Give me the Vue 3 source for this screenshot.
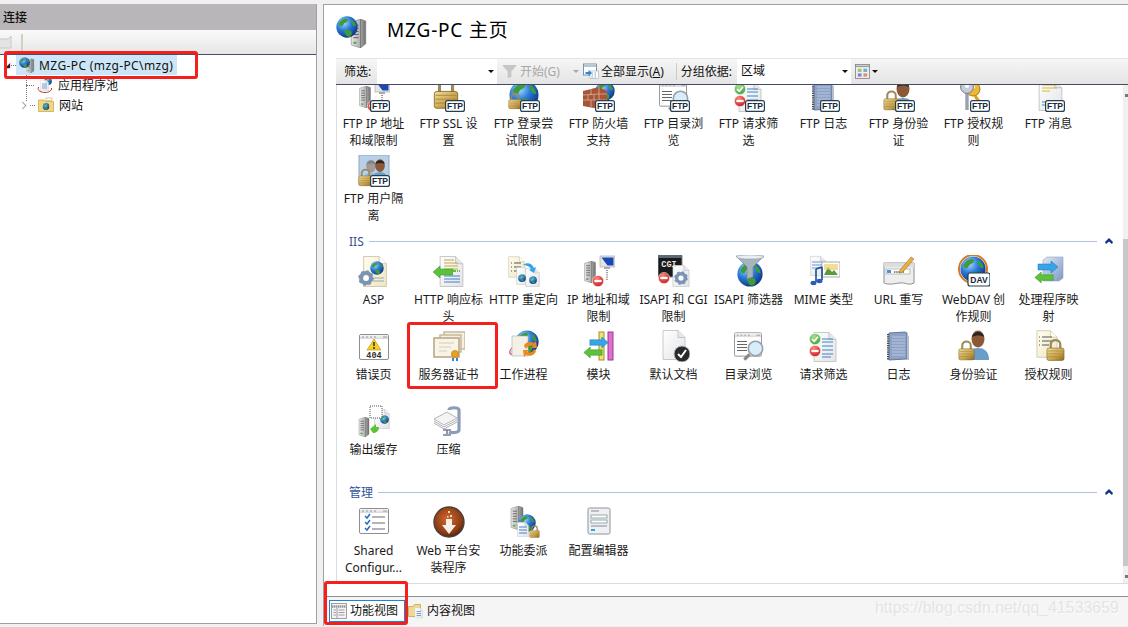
<template>
  <svg class="defs" width="0" height="0" aria-hidden="true">
    <defs>
      <radialGradient id="gBlue" cx="0.35" cy="0.3" r="0.8"><stop offset="0" stop-color="#a8dcff"/><stop offset="0.45" stop-color="#2a7bd8"/><stop offset="1" stop-color="#0b2a78"/></radialGradient>
      <linearGradient id="gGold" x1="0" y1="0" x2="1" y2="1"><stop offset="0" stop-color="#f3dfa0"/><stop offset="0.6" stop-color="#c8a24c"/><stop offset="1" stop-color="#8a6a22"/></linearGradient>
      <linearGradient id="gGrey" x1="0" y1="0" x2="1" y2="0"><stop offset="0" stop-color="#e8e8e8"/><stop offset="0.6" stop-color="#b0b0b0"/><stop offset="1" stop-color="#6c6c6c"/></linearGradient>
      <radialGradient id="gRed" cx="0.4" cy="0.3" r="0.8"><stop offset="0" stop-color="#ff8a78"/><stop offset="1" stop-color="#c0101a"/></radialGradient>
      <radialGradient id="gGreen" cx="0.4" cy="0.3" r="0.8"><stop offset="0" stop-color="#a8e090"/><stop offset="1" stop-color="#3a9a30"/></radialGradient>
      <linearGradient id="gPaper" x1="0" y1="0" x2="1" y2="1"><stop offset="0" stop-color="#ffffff"/><stop offset="1" stop-color="#e2e4e8"/></linearGradient>
      <linearGradient id="gCream" x1="0" y1="0" x2="1" y2="1"><stop offset="0" stop-color="#fffdf0"/><stop offset="1" stop-color="#f0e6c4"/></linearGradient>
      <linearGradient id="gSteel" x1="0" y1="0" x2="1" y2="1"><stop offset="0" stop-color="#dfe8f4"/><stop offset="1" stop-color="#7c97c4"/></linearGradient>
      <linearGradient id="gWin" x1="0" y1="0" x2="0" y2="1"><stop offset="0" stop-color="#f8f8f8"/><stop offset="1" stop-color="#d8d8d8"/></linearGradient>
      <radialGradient id="gBrown" cx="0.45" cy="0.4" r="0.6"><stop offset="0" stop-color="#d0682c"/><stop offset="0.8" stop-color="#8a3a14"/><stop offset="1" stop-color="#4c2410"/></radialGradient>
    </defs>

    <symbol id="s-globe" viewBox="0 0 32 32">
      <circle cx="16" cy="16" r="15.5" fill="url(#gBlue)"/>
      <path d="M4 11c3-5 8-8 12-7 3 2 0 5-3 6s-2 5-5 5-3-2-4-4zM12 21c3-2 8-1 10 1s1 6-2 8c-3 1-5-1-6-3s-3-4-2-6zM22 5c3 1 7 6 7 10-2 0-5-1-6-4s-2-3-1-6z" fill="#3f9a3c"/>
    </symbol>
    <symbol id="s-server" viewBox="0 0 16 28">
      <path d="M1 3l9-3 5 2v22l-5 4-9-3z" fill="url(#gGrey)" stroke="#777" stroke-width=".5"/>
      <path d="M10 0v28" stroke="#666" stroke-width=".7"/>
      <path d="M3 6h5M3 9h5M3 12h5M3 15h5M3 18h5" stroke="#555" stroke-width=".9"/>
      <rect x="3" y="22" width="3" height="2" fill="#5aa84a"/>
    </symbol>
    <symbol id="s-lock" viewBox="0 0 20 24">
      <path d="M5 11V6c0-6 10-6 10 0v5" fill="none" stroke="#9c8a5a" stroke-width="2.4"/>
      <rect x="1" y="10" width="18" height="13" rx="2" fill="url(#gGold)" stroke="#7c5c18" stroke-width=".6"/>
      <path d="M2 13h16M2 16h16M2 19h16" stroke="#a88636" stroke-width=".7"/>
    </symbol>
    <symbol id="s-no" viewBox="0 0 12 12">
      <circle cx="6" cy="6" r="5.6" fill="url(#gRed)" stroke="#fff" stroke-width=".5"/>
      <rect x="2.4" y="4.9" width="7.2" height="2.2" fill="#fff"/>
    </symbol>
    <symbol id="s-ok" viewBox="0 0 12 12">
      <circle cx="6" cy="6" r="5.6" fill="url(#gGreen)" stroke="#fff" stroke-width=".5"/>
      <path d="M3 6l2.2 2.4L9 3.8" fill="none" stroke="#fff" stroke-width="1.6"/>
    </symbol>
    <symbol id="s-doc" viewBox="0 0 24 30">
      <path d="M1 .5h15l7 7v22H1z" fill="url(#gPaper)" stroke="#bcbcbc" stroke-width=".8"/>
      <path d="M16 .5v7h7" fill="#e8e8e8" stroke="#bcbcbc" stroke-width=".8"/>
    </symbol>
    <symbol id="s-cream" viewBox="0 0 24 30">
      <path d="M1 .5h15l7 7v22H1z" fill="url(#gCream)" stroke="#c8c0a0" stroke-width=".8"/>
      <path d="M16 .5v7h7" fill="#fff" stroke="#c8c0a0" stroke-width=".8"/>
    </symbol>
    <symbol id="s-person" viewBox="0 0 24 30">
      <ellipse cx="12" cy="9" rx="6.5" ry="8.5" fill="#8a5a38"/>
      <path d="M6 7c1-6 11-7 12 0-3-2-8-2-12 0z" fill="#2c2420"/>
      <path d="M1 30c0-9 5-12 11-12s11 3 11 12z" fill="#6c9cc8"/>
    </symbol>
    <symbol id="s-gear" viewBox="0 0 16 16">
      <circle cx="8" cy="8" r="5" fill="none" stroke="#7c94b4" stroke-width="4"/>
      <circle cx="8" cy="8" r="6.6" fill="none" stroke="#7c94b4" stroke-width="2.4" stroke-dasharray="2.6 2.6"/>
      <circle cx="8" cy="8" r="2.6" fill="#fff"/>
    </symbol>
    <symbol id="s-lens" viewBox="0 0 16 16">
      <path d="M5 11l-4 4" stroke="#888" stroke-width="2.4"/>
      <circle cx="9.5" cy="6.5" r="5.5" fill="#d8ecfa" stroke="#9aa0a8" stroke-width="1.2"/>
    </symbol>
    <symbol id="s-window" viewBox="0 0 30 26">
      <rect x=".5" y=".5" width="29" height="25" rx="1.5" fill="#fff" stroke="#8e8e8e"/>
      <rect x="1" y="1" width="28" height="4" fill="url(#gWin)"/>
      <path d="M3 3h2M7 3h2M11 3h2M15 3h2M24 3h4" stroke="#999"/>
    </symbol>
    <symbol id="s-garrow" viewBox="0 0 20 12">
      <path d="M0 6l7-6v3h13v6H7v3z" fill="#5cc23a" stroke="#3a8a2a" stroke-width=".5"/>
    </symbol>
    <symbol id="s-barrow" viewBox="0 0 20 12">
      <path d="M20 6l-7-6v3H0v6h13v3z" fill="#35a4e8" stroke="#1c74b4" stroke-width=".5"/>
    </symbol>

    <symbol id="i-ip" viewBox="0 0 32 32">
      <use href="#s-server" x="0" y="6" width="14" height="22"/>
      <rect x="17" y="1" width="15" height="11" fill="#e4e4e4" stroke="#a0a0a0" stroke-width=".6"/>
      <path d="M18.5 2.5h12v8h-6z" fill="#1a48b8"/>
      <path d="M21 12h6v2h-6z" fill="#aaa"/>
      <path d="M24 15v10" stroke="#222" stroke-dasharray="1 1.2"/>
      <use href="#s-no" x="9" y="20" width="12" height="12"/>
    </symbol>
    <symbol id="i-ssl" viewBox="0 0 32 32">
      <use href="#s-lock" x="0" y="-2" width="26" height="32"/>
    </symbol>
    <symbol id="i-login" viewBox="0 0 32 32">
      <use href="#s-globe" x="1" y="0" width="30" height="30"/>
      <use href="#s-lock" x="0" y="12" width="14" height="18"/>
    </symbol>
    <symbol id="i-wall" viewBox="0 0 32 32">
      <use href="#s-globe" x="12" y="1" width="20" height="20"/>
      <path d="M0 11l16-4 8 4v15l-8 3-16-3z" fill="#a85438"/>
      <path d="M0 15l16-1 8 0M0 20l16 0 8 0M8 9v6M16 7v22M5 15v5M11 15v5M8 20v7" stroke="#e0c0a8" stroke-width=".7" fill="none"/>
    </symbol>
    <symbol id="i-browse" viewBox="0 0 32 32">
      <use href="#s-window" x="1" y="2" width="28" height="25"/>
      <path d="M4 11h10v1H4zM4 14h10v1H4zM4 17h10v1H4zM4 20h10v1H4z" fill="#666"/>
      <use href="#s-lens" x="10" y="10" width="21" height="21"/>
    </symbol>
    <symbol id="i-req" viewBox="0 0 32 32">
      <use href="#s-doc" x="5" y="2" width="24" height="30"/>
      <path d="M14 9h11M14 12h11M14 16h11M14 20h11M14 24h11M14 27h9" stroke="#3f82c6"/>
      <use href="#s-ok" x="1" y="3" width="12" height="12"/>
      <use href="#s-no" x="1" y="15" width="12" height="12"/>
    </symbol>
    <symbol id="i-log" viewBox="0 0 32 32">
      <path d="M6 3l16-1 2 1v26l-18 1z" fill="#8ea2c8" stroke="#4c5f88" stroke-width=".8"/>
      <path d="M9 7h13M9 10h13M9 13h13M9 16h13M9 19h13M9 22h13M9 25h13" stroke="#c4cfe4" stroke-width=".8"/>
      <path d="M5 4v26" stroke="#444" stroke-width="2" stroke-dasharray="1.2 1"/>
      <path d="M24 5l2 1v24l-2 0z" fill="#b8bfcc"/>
    </symbol>
    <symbol id="i-auth" viewBox="0 0 32 32">
      <use href="#s-person" x="8" y="0" width="24" height="30"/>
      <use href="#s-lock" x="0" y="10" width="17" height="21"/>
    </symbol>
    <symbol id="i-keys" viewBox="0 0 32 32">
      <path d="M17 16l9 12" stroke="#e0a020" stroke-width="3"/>
      <circle cx="15" cy="9" r="7" fill="#f0b830" stroke="#a87818"/>
      <circle cx="15" cy="7" r="2" fill="#fff"/>
      <path d="M9 12v18" stroke="#9aa0b0" stroke-width="3.4"/>
      <circle cx="9" cy="7" r="6.4" fill="#c8ccd8" stroke="#70788c"/>
      <circle cx="9" cy="6" r="2" fill="#fff"/>
    </symbol>
    <symbol id="i-msg" viewBox="0 0 32 32">
      <use href="#s-doc" x="5" y="0" width="25" height="31"/>
      <path d="M9 5h15M9 8h15M9 11h8" stroke="#d8b830" stroke-width="1.1"/>
      <path d="M9 22h12M9 25h12" stroke="#3f82c6"/>
    </symbol>
    <symbol id="i-authz" viewBox="0 0 32 32">
      <use href="#s-cream" x="3" y="0" width="22" height="28"/>
      <path d="M6 7h1M6 11h1M6 15h1M9 7h10M9 11h10M9 15h7" stroke="#555"/>
      <use href="#s-lock" x="13" y="8" width="19" height="24"/>
    </symbol>
    <symbol id="i-isolate" viewBox="0 0 32 32">
      <rect x="1" y="0" width="30" height="28" fill="#b8d0e8" stroke="#90a8c0"/>
      <use href="#s-person" x="4" y="4" width="18" height="23" opacity=".45"/>
      <use href="#s-person" x="13" y="3" width="18" height="24"/>
      <use href="#s-lock" x="0" y="13" width="15" height="19"/>
    </symbol>
    <symbol id="i-asp" viewBox="0 0 32 32">
      <use href="#s-cream" x="4" y="1" width="26" height="31"/>
      <use href="#s-globe" x="12" y="6" width="14" height="14"/>
      <path d="M15 23h11M15 26h11" stroke="#9aa" />
      <use href="#s-gear" x="0" y="15" width="16" height="16"/>
    </symbol>
    <symbol id="i-header" viewBox="0 0 32 32">
      <use href="#s-doc" x="6" y="1" width="25" height="31"/>
      <path d="M11 5h10M11 8h14M11 11h14M11 14h14" stroke="#c8a838"/>
      <path d="M11 21h16M11 24h16M11 27h16" stroke="#3f82c6"/>
      <use href="#s-garrow" x="0" y="11" width="20" height="12"/>
      <path d="M20 15h3v2h-3zM24 15h1v2h-1zM26 15h1v2h-1z" fill="#5cc23a"/>
    </symbol>
    <symbol id="i-redirect" viewBox="0 0 32 32">
      <use href="#s-cream" x="0" y="1" width="17" height="22"/>
      <path d="M3 8h1M3 12h1M3 16h1M6 8h7M6 12h7M6 16h7" stroke="#555"/>
      <use href="#s-doc" x="8" y="12" width="14" height="18"/>
      <use href="#s-doc" x="17" y="13" width="15" height="19"/>
      <use href="#s-globe" x="10" y="19" width="8" height="8"/>
      <use href="#s-globe" x="21" y="21" width="8" height="8"/>
      <path d="M15 10c4-3 9-2 11 3l2-1-2 6-5-3 2-1c-2-3-5-4-8-4z" fill="#35a4e8"/>
    </symbol>
    <symbol id="i-cgi" viewBox="0 0 32 32">
      <rect x="0" y="0" width="24" height="22" rx="1" fill="#1a1a1a" stroke="#888"/>
      <rect x="0" y="0" width="24" height="3" fill="#5c6a78"/>
      <use href="#s-doc" x="14" y="10" width="18" height="22"/>
      <use href="#s-gear" x="16" y="16" width="14" height="14"/>
      <use href="#s-no" x="0" y="17" width="12" height="12"/>
    </symbol>
    <symbol id="i-funnel" viewBox="0 0 32 32">
      <use href="#s-globe" x="4" y="6" width="26" height="26"/>
      <path d="M3 1h28L20 12v10l-6 2V12z" fill="#a8b4bc" stroke="#70808c" stroke-width=".6"/>
      <ellipse cx="17" cy="2" rx="14" ry="2" fill="#e8eef2" stroke="#8a98a4" stroke-width=".5"/>
    </symbol>
    <symbol id="i-mime" viewBox="0 0 32 32">
      <use href="#s-doc" x="2" y="0" width="16" height="22"/>
      <path d="M4 7h10M4 10h10M4 13h10" stroke="#6c9ad0"/>
      <rect x="14" y="7" width="18" height="15" fill="#fff" stroke="#aaa"/>
      <path d="M16 20l4-8 4 5 2-2 4 5z" fill="#5a9a3c"/>
      <path d="M16 9h14v6h-14z" fill="#e8c850" opacity=".6"/>
      <path d="M8 14v13M14 12v13M8 14l6-2" stroke="#1c4ca0" stroke-width="1.6" fill="none"/>
      <ellipse cx="5.500" cy="28" rx="3" ry="2.200" fill="#2a5cb8"/>
      <ellipse cx="11.500" cy="26" rx="3" ry="2.200" fill="#2a5cb8"/>
    </symbol>
    <symbol id="i-rewrite" viewBox="0 0 32 32">
      <path d="M1 8h30v20c-6 3-8-1-15 0s-10 2-15 0z" fill="#eee" stroke="#8e8e8e"/>
      <rect x="1" y="8" width="30" height="4" fill="#ddd"/>
      <rect x="3" y="14" width="24" height="5" fill="#fff" stroke="#999" stroke-width=".6"/>
      <rect x="4" y="15" width="4" height="3" fill="#4a90d0"/>
      <path d="M11 17h10" stroke="#111" stroke-dasharray="1.4 .8"/>
      <path d="M17 15L28 2l3 2-11 13-4 1z" fill="#e8b040" stroke="#8a6418" stroke-width=".5"/>
    </symbol>
    <symbol id="i-dav" viewBox="0 0 32 32">
      <circle cx="15" cy="14" r="14" fill="none" stroke="#d87820" stroke-width="2"/>
      <use href="#s-globe" x="2" y="1" width="26" height="26"/>
      <rect x="10" y="18" width="22" height="13" rx="2" fill="#fff" stroke="#27404f" stroke-width="1.2"/>
    </symbol>
    <symbol id="i-handler" viewBox="0 0 32 32">
      <path d="M10 5l4-3h16v21l-4 3H10z" fill="url(#gSteel)" stroke="#8ea4c0" stroke-width=".6"/>
      <use href="#s-barrow" x="3" y="6" width="24" height="12"/>
      <use href="#s-garrow" x="0" y="17" width="22" height="11"/>
    </symbol>
    <symbol id="i-404" viewBox="0 0 32 32">
      <use href="#s-window" x="0" y="4" width="32" height="26"/>
      <path d="M16 9l7 11H9z" fill="#f8d020" stroke="#b88810" stroke-width=".6"/>
      <path d="M16 12v4M16 17v2" stroke="#222" stroke-width="1.400"/>
    </symbol>
    <symbol id="i-cert" viewBox="0 0 32 32">
      <rect x="11" y="2" width="21" height="17" fill="#f6f0e2" stroke="#c4b498" stroke-width="1.400"/>
      <rect x="7" y="5" width="21" height="17" fill="#f6f0e2" stroke="#c4b498" stroke-width="1.400"/>
      <rect x="1" y="8" width="25" height="19" fill="#f8f4e8" stroke="#bca888" stroke-width="1.600"/>
      <path d="M6 13h15M6 17h12M6 21h8" stroke="#d8ccb4"/>
      <circle cx="22" cy="24" r="3.600" fill="#e8a020" stroke="#b87818" stroke-width=".6"/>
      <path d="M20 28v3M24 28v3" stroke="#2a6cd0" stroke-width="1.800"/>
    </symbol>
    <symbol id="i-worker" viewBox="0 0 32 32">
      <use href="#s-globe" x="7" y="0" width="24" height="24"/>
      <path d="M2 24c-1-4 1-6 4-7l2 8z" fill="#e0e0e0" stroke="#b02020" stroke-width=".8"/>
      <rect x="4" y="6" width="16" height="20" fill="#f4f1e4" stroke="#aaa" stroke-width=".6"/>
      <path d="M16 16c1-4 6-5 10-3l2-2 1 7-6 0 2-2c-3-1-6 0-7 3z" fill="#e88a20"/>
      <path d="M28 21c-1 4-6 6-10 4l-2 2-1-7 6 0-2 2c3 1 6 0 7-3z" fill="#e88a20"/>
    </symbol>
    <symbol id="i-module" viewBox="0 0 32 32">
      <rect x="16" y="2" width="5" height="28" fill="#f0e080" stroke="#a89020"/>
      <rect x="25" y="2" width="5" height="28" fill="#e070d0" stroke="#9a3a90"/>
      <use href="#s-barrow" x="6" y="7" width="20" height="11"/>
      <use href="#s-garrow" x="0" y="17" width="20" height="11"/>
    </symbol>
    <symbol id="i-default" viewBox="0 0 32 32">
      <use href="#s-doc" x="4" y="0" width="24" height="30"/>
      <circle cx="24" cy="24" r="8" fill="#2a2a2a" stroke="#bbb"/>
      <path d="M20 24l3 3 5-7" fill="none" stroke="#fff" stroke-width="2"/>
    </symbol>
    <symbol id="i-cache" viewBox="0 0 32 32">
      <use href="#s-doc" x="16" y="4" width="16" height="20"/>
      <use href="#s-globe" x="22" y="10" width="9" height="9"/>
      <rect x="12" y="1" width="12" height="12" fill="#fff" stroke="#555" stroke-dasharray="1 1"/>
      <use href="#s-server" x="0" y="12" width="12" height="20"/>
      <path d="M12 24l6-5v3h3c0 4-3 6-6 6z" fill="#5cc23a"/>
    </symbol>
    <symbol id="i-clamp" viewBox="0 0 32 32">
      <path d="M16 5c0-3 10-3 10 0v20c0 3-8 3-10 2" fill="none" stroke="#8e9cb8" stroke-width="3.200"/>
      <path d="M1 14l13-7 10 6-13 7z" fill="#f4f4f4" stroke="#999" stroke-width=".7"/>
      <path d="M1 16l10 6 13-7M1 18l10 6 13-7" fill="none" stroke="#999" stroke-width=".8"/>
      <path d="M10 25l8 0M14 25v4M10 30h8" stroke="#70809c" stroke-width="1.600" fill="none"/>
    </symbol>
    <symbol id="i-shared" viewBox="0 0 32 32">
      <use href="#s-window" x="1" y="2" width="30" height="26"/>
      <path d="M7 10l2 2 3-4M7 16l2 2 3-4M7 22l2 2 3-4" fill="none" stroke="#2a6cc8" stroke-width="1.500"/>
      <path d="M14 11h13M14 17h13M14 23h13" stroke="#667"/>
    </symbol>
    <symbol id="i-webpi" viewBox="0 0 32 32">
      <circle cx="16" cy="16" r="15" fill="url(#gBrown)" stroke="#4a4034" stroke-width="1.400"/>
      <path d="M13 13h6v6h4l-7 9-7-9h4z" fill="#f4f0e8"/>
      <path d="M15 5h2v2h-2zM17 9h2v2h-2zM14 10h1.500v1.500H14z" fill="#f8d8c0"/>
    </symbol>
    <symbol id="i-delegate" viewBox="0 0 32 32">
      <use href="#s-server" x="1" y="0" width="16" height="24"/>
      <use href="#s-globe" x="10" y="8" width="18" height="18"/>
      <use href="#s-doc" x="9" y="16" width="12" height="15"/>
      <path d="M11 21h8M11 24h8M11 27h8" stroke="#3f82c6"/>
      <use href="#s-lock" x="21" y="19" width="11" height="13"/>
    </symbol>
    <symbol id="i-editor" viewBox="0 0 32 32">
      <rect x="5" y="2" width="22" height="26" rx="1.500" fill="#eef0f2" stroke="#8e9298"/>
      <rect x="8" y="9" width="16" height="3" fill="#fff" stroke="#9aa"/>
      <rect x="8" y="14" width="16" height="3" fill="#fff" stroke="#9aa"/>
      <path d="M8 5h8M8 20h16" stroke="#889"/>
      <path d="M8 24h4" stroke="#35a4e8" stroke-width="2"/>
    </symbol>
    <symbol id="i-home" viewBox="0 0 32 32">
      <use href="#s-server" x="13" y="3" width="19" height="29"/>
      <use href="#s-globe" x="0" y="0" width="22" height="22"/>
    </symbol>
    <symbol id="i-pool" viewBox="0 0 32 32">
      <use href="#s-globe" x="14" y="0" width="16" height="16"/>
      <use href="#s-doc" x="6" y="6" width="18" height="22"/>
      <path d="M10 14h10M10 18h10M10 22h10" stroke="#3f82c6" stroke-width="1.400"/>
      <path d="M3 20c-3 8 6 11 13 11s14-3 13-9" fill="none" stroke="#c03028" stroke-width="2"/>
    </symbol>
    <symbol id="i-site" viewBox="0 0 32 32">
      <path d="M1 6h12l2 3h16v20H1z" fill="#f4d67c" stroke="#b89438" stroke-width="1.200"/>
      <rect x="16" y="2" width="12" height="5" fill="#fff" stroke="#b89438"/>
      <use href="#s-globe" x="9" y="12" width="14" height="14"/>
    </symbol>
    <symbol id="i-feature" viewBox="0 0 32 32">
      <rect x="1" y="1" width="30" height="30" fill="#f4f4f4" stroke="#888" stroke-width="1.600"/>
      <path d="M2 7h28" stroke="#999" stroke-width="5" stroke-dasharray="3 1"/>
      <path d="M12 10v20M5 14h5M5 19h5M5 24h5M15 14h12M15 19h12M15 24h12" stroke="#888" stroke-width="1.600"/>
    </symbol>
    <symbol id="i-content" viewBox="0 0 32 32">
      <path d="M1 7h9l3-4h12v24H1z" fill="#f0d890" stroke="#b89c50" stroke-width="1.400"/>
      <use href="#s-doc" x="13" y="9" width="17" height="22"/>
      <path d="M17 17h9M17 21h9M17 25h9" stroke="#3f82c6" stroke-width="1.400"/>
    </symbol>
    <symbol id="i-showall" viewBox="0 0 32 32">
      <rect x="1" y="2" width="26" height="22" fill="#fff" stroke="#5c7c94" stroke-width="1.600"/>
      <path d="M2 6h24" stroke="#9cb4c8" stroke-width="3"/>
      <rect x="14" y="16" width="17" height="15" fill="#fff" stroke="#8a9aa8"/>
      <path d="M17 20h3M23 20h3M17 24h3M23 24h3M17 28h3M23 28h3" stroke="#6688a8" stroke-width="1.600"/>
      <path d="M5 18h6v-4l7 6-7 6v-4H5z" fill="#2a88d8"/>
    </symbol>
    <symbol id="i-views" viewBox="0 0 32 32">
      <rect x="1" y="1" width="30" height="30" fill="#eee" stroke="#777" stroke-width="1.600"/>
      <path d="M2 5h28" stroke="#999" stroke-width="3"/>
      <rect x="6" y="10" width="8" height="7" fill="#9cc870"/>
      <rect x="18" y="10" width="8" height="7" fill="#70b0d8"/>
      <rect x="6" y="20" width="8" height="7" fill="#9080c8"/>
      <rect x="18" y="20" width="8" height="7" fill="#e09070"/>
    </symbol>
  </svg>

  <div class="page">
    <aside class="conn">
      <div class="conn-title">连接</div>
      <div class="conn-bar">
        <svg class="conn-tool" viewBox="0 0 14 14"><path d="M0 13V4h9l3-3v12z" fill="#e4e4e4" stroke="#c8c8c8"/></svg>
        <span class="conn-sep"></span>
      </div>
      <div class="tree">
        <div class="tree-row">
          <svg class="twist" viewBox="0 0 8 8"><path d="M7 1v6H1z" fill="#222"/></svg>
          <span class="dots"></span>
          <span class="tree-sel">
            <svg class="tree-icon" viewBox="0 0 32 32"><use href="#i-home"/></svg>
            <span class="tree-main">MZG-PC (mzg-PC\mzg)</span>
          </span>
        </div>
        <div class="tree-row sub">
          <span class="dots long"></span>
          <svg class="tree-icon" viewBox="0 0 32 32"><use href="#i-pool"/></svg>
          <span class="tree-text">应用程序池</span>
        </div>
        <div class="tree-row sub">
          <svg class="twist open" viewBox="0 0 8 10"><path d="M1.500 1l4 4-4 4" fill="none" stroke="#999" stroke-width="1.200"/></svg>
          <span class="dots short"></span>
          <svg class="tree-icon" viewBox="0 0 32 32"><use href="#i-site"/></svg>
          <span class="tree-text">网站</span>
        </div>
        <span class="tree-line"></span>
      </div>
    </aside>

    <main class="home">
      <header class="home-head">
        <svg class="home-icon" viewBox="0 0 32 32"><use href="#i-home"/></svg>
        <h1>MZG-PC 主页</h1>
      </header>

      <div class="filter-bar">
        <span class="f-label">筛选:</span>
        <span class="f-combo first"><i class="caret"></i></span>
        <svg class="f-funnel" viewBox="0 0 16 14"><path d="M0 0h16l-6 7v6l-4 1V7z" fill="#c4c8c4"/></svg>
        <span class="f-off">开始(G)</span>
        <i class="caret off"></i>
        <svg class="f-show" viewBox="0 0 32 32"><use href="#i-showall"/></svg>
        <span class="f-all">全部显示(<u>A</u>)</span>
        <span class="f-sep"></span>
        <span class="f-group">分组依据:</span>
        <span class="f-combo second">区域<i class="caret"></i></span>
        <svg class="f-views" viewBox="0 0 32 32"><use href="#i-views"/></svg>
        <i class="caret small"></i>
      </div>

      <div class="content">
        <div class="scroller">
          <div class="grid">
            <div v-for="item in ftpItems" :key="item.lines[0]" class="tile">
              <svg class="tile-icon" viewBox="0 0 32 32">
                <use :href="'#i-' + item.icon"/>
                <rect x="12.6" y="20.600" width="18.800" height="10.800" rx="2" fill="#fff" stroke="#27404f" stroke-width="1.200"/>
                <text x="22" y="29" text-anchor="middle" class="badge-text">FTP</text>
              </svg>
              <div class="tile-label"><div v-for="l in item.lines" :key="l">{{ l }}</div></div>
            </div>
          </div>

          <div v-for="sec in sections" :key="sec.title">
            <div class="sec-head">
              <span class="sec-title">{{ sec.title }}</span>
              <span class="sec-line"></span>
              <svg class="sec-chev" viewBox="0 0 8 6"><path d="M4 0l4 4-1 2-3-2.500L1 6 0 4z" fill="#0c3390"/></svg>
            </div>
            <div class="grid">
              <div v-for="item in sec.items" :key="item.lines[0]" class="tile in-sec">
                <svg class="tile-icon" viewBox="0 0 32 32">
                  <use :href="'#i-' + item.icon"/>
                  <text v-if="item.mark" :x="item.mark.x" :y="item.mark.y" text-anchor="middle" :class="item.mark.cls">{{ item.mark.text }}</text>
                </svg>
                <div class="tile-label"><div v-for="l in item.lines" :key="l">{{ l }}</div></div>
              </div>
            </div>
          </div>
        </div>
        <div class="scrollbar">
          <svg class="sb-mark" viewBox="0 0 4 4"><rect width="4" height="4" fill="#777"/></svg>
          <div class="sb-thumb"></div>
          <svg class="sb-mark" viewBox="0 0 4 4"><rect width="4" height="4" fill="#777"/></svg>
        </div>
      </div>

      <div class="spacer"></div>

      <footer class="tabs">
        <span class="tab active">
          <svg class="tab-icon" viewBox="0 0 32 32"><use href="#i-feature"/></svg>功能视图
        </span>
        <span class="tab">
          <svg class="tab-icon" viewBox="0 0 32 32"><use href="#i-content"/></svg>内容视图
        </span>
        <span class="mark">https://blog.csdn.net/qq_41533659</span>
      </footer>
    </main>

    <div class="red box-tree"></div>
    <div class="red box-cert"></div>
    <div class="red box-tab"></div>
  </div>
</template>

<script setup>
const ftpItems = [
  { icon: 'ip', lines: ['FTP IP 地址', '和域限制'] },
  { icon: 'ssl', lines: ['FTP SSL 设', '置'] },
  { icon: 'login', lines: ['FTP 登录尝', '试限制'] },
  { icon: 'wall', lines: ['FTP 防火墙', '支持'] },
  { icon: 'browse', lines: ['FTP 目录浏', '览'] },
  { icon: 'req', lines: ['FTP 请求筛', '选'] },
  { icon: 'log', lines: ['FTP 日志'] },
  { icon: 'auth', lines: ['FTP 身份验', '证'] },
  { icon: 'keys', lines: ['FTP 授权规', '则'] },
  { icon: 'msg', lines: ['FTP 消息'] },
  { icon: 'isolate', lines: ['FTP 用户隔', '离'] },
]

const sections = [
  {
    title: 'IIS',
    items: [
      { icon: 'asp', lines: ['ASP'] },
      { icon: 'header', lines: ['HTTP 响应标', '头'] },
      { icon: 'redirect', lines: ['HTTP 重定向'] },
      { icon: 'ip', lines: ['IP 地址和域', '限制'] },
      { icon: 'cgi', lines: ['ISAPI 和 CGI', '限制'], mark: { x: 11, y: 12, cls: 'cgi-text', text: 'CGI' } },
      { icon: 'funnel', lines: ['ISAPI 筛选器'] },
      { icon: 'mime', lines: ['MIME 类型'] },
      { icon: 'rewrite', lines: ['URL 重写'] },
      { icon: 'dav', lines: ['WebDAV 创', '作规则'], mark: { x: 21, y: 28, cls: 'badge-text', text: 'DAV' } },
      { icon: 'handler', lines: ['处理程序映', '射'] },
      { icon: '404', lines: ['错误页'], mark: { x: 16, y: 28, cls: 'cgi-text dark', text: '404' } },
      { icon: 'cert', lines: ['服务器证书'] },
      { icon: 'worker', lines: ['工作进程'] },
      { icon: 'module', lines: ['模块'] },
      { icon: 'default', lines: ['默认文档'] },
      { icon: 'browse', lines: ['目录浏览'] },
      { icon: 'req', lines: ['请求筛选'] },
      { icon: 'log', lines: ['日志'] },
      { icon: 'auth', lines: ['身份验证'] },
      { icon: 'authz', lines: ['授权规则'] },
      { icon: 'cache', lines: ['输出缓存'] },
      { icon: 'clamp', lines: ['压缩'] },
    ],
  },
  {
    title: '管理',
    items: [
      { icon: 'shared', lines: ['Shared', 'Configur...'] },
      { icon: 'webpi', lines: ['Web 平台安', '装程序'] },
      { icon: 'delegate', lines: ['功能委派'] },
      { icon: 'editor', lines: ['配置编辑器'] },
    ],
  },
]
</script>

<style>
html, body { margin: 0; background: #f0f0f0; overflow: hidden; }
</style>

<style scoped>
.defs { position: absolute; }
.badge-text { font: 700 8.5px "Liberation Sans", sans-serif; fill: #16293a; }
.cgi-text { font: 700 8.5px "Liberation Mono", monospace; fill: #e8e8e8; }
.cgi-text.dark { fill: #333; }

.page {
  position: relative;
  display: flex;
  width: 1128px;
  height: 627px;
  padding-top: 4px;
  box-sizing: border-box;
  background: #f0f0f0;
  font: 12px/17px "Noto Sans", "Noto Sans CJK SC", sans-serif;
  color: #111;
}

.conn {
  width: 317px;
  height: 620px;
  flex: none;
  box-sizing: border-box;
  background: #fff;
  border-right: 1px solid #a0a0a0;
  border-bottom: 1px solid #a0a0a0;
}
.conn-title {
  height: 26px;
  line-height: 28px;
  padding-left: 3px;
  background: #b9b6b9;
  font-weight: 500;
  color: #111;
}
.conn-bar {
  display: flex;
  align-items: center;
  height: 24px;
  background: linear-gradient(#fafafa, #e6e6e6);
  border-bottom: 1px solid #4a4e6a;
}
.conn-tool { width: 14px; height: 14px; margin-left: -1px; }
.conn-sep { width: 2px; height: 17px; margin-left: 8px; background: #d4d0c0; }

.tree { position: relative; }
.tree-row { display: flex; align-items: center; height: 20px; }
.twist { width: 7px; height: 7px; margin-left: 4px; flex: none; }
.dots { width: 5px; border-top: 1px dotted #777; flex: none; }
.tree-sel {
  display: flex;
  align-items: center;
  height: 20px;
  padding-right: 4px;
  background: #cde6f7;
}
.tree-icon { width: 16px; height: 16px; flex: none; margin-left: 3px; }
.tree-main { margin-left: 4px; white-space: nowrap; letter-spacing: .38px; }
.tree-text { margin-left: 5px; }
.sub { padding-left: 26px; }
.dots.long { width: 8px; }
.tree-line { position: absolute; left: 26px; top: 20px; height: 30px; border-left: 1px dotted #777; }
.sub .twist.open { width: 7px; height: 9px; margin-left: -5px; margin-right: 2px; background: #fff; position: relative; z-index: 1; }

.home {
  width: 805px;
  height: 622px;
  margin-left: 6px;
  display: flex;
  flex-direction: column;
  background: #fff;
  border-top: 1px solid #a0a0a0;
  border-left: 1px solid #a0a0a0;
  box-sizing: border-box;
}
.home-head {
  display: flex;
  align-items: center;
  height: 53px;
  flex: none;
  padding-left: 12px;
}
.home-icon { width: 32px; height: 32px; }
.home-head h1 {
  margin: 0 0 2px 19px;
  font-size: 19px;
  font-weight: 400;
  color: #000;
  letter-spacing: .8px;
}

.filter-bar {
  display: flex;
  align-items: center;
  height: 27px;
  padding-bottom: 1px;
  flex: none;
  margin-left: 12px;
  box-sizing: border-box;
  background: linear-gradient(#f6f6f6, #e4e4e4);
  border-top: 1px solid #e4e4e4;
  border-bottom: 1px solid #454a68;
  white-space: nowrap;
}
.f-label { margin-left: 8px; width: 33px; }
.f-combo {
  position: relative;
  display: block;
  height: 25px;
  margin-bottom: -1px;
  line-height: 24px;
  background: #fff;
  box-sizing: border-box;
}
.f-combo.first { width: 120px; }
.f-combo.second { width: 114px; padding-left: 4px; margin-left: 5px; }
.caret {
  display: inline-block;
  width: 0;
  height: 0;
  border-left: 3px solid transparent;
  border-right: 3px solid transparent;
  border-top: 3px solid #111;
}
.f-combo .caret { position: absolute; right: 3px; top: 11px; }
.f-funnel { width: 15px; height: 13px; margin-left: 5px; }
.f-off { margin-left: 3px; color: #a8a8a8; }
.caret.off { margin-left: 13px; border-top-color: #a8a8a8; }
.f-show { width: 16px; height: 16px; margin-left: 4px; }
.f-all { margin-left: 2px; }
.f-sep { width: 1px; height: 17px; margin: 0 4px 0 12px; background: #cfcbbd; }
.f-views { width: 15px; height: 15px; margin-left: 4px; }
.caret.small { margin-left: 2px; }

.content {
  flex: 1;
  min-height: 0;
  display: flex;
  margin-left: 12px;
  border-left: 1px solid #dcdcdc;
  border-bottom: 1px solid #dcdcdc;
}
.scroller { flex: 1; overflow: hidden; }
.scroller > .grid:first-child { margin-top: -10px; }
.grid {
  display: grid;
  grid-template-columns: repeat(10, 75px);
  grid-auto-rows: 75px;
  margin-left: -1px;
}
.tile {
  display: flex;
  flex-direction: column;
  align-items: center;
  white-space: nowrap;
}
.tile-icon { width: 32px; height: 32px; margin-top: 5px; flex: none; }
.tile-label { margin-top: 3px; text-align: center; color: #1a1a1a; }
.in-sec .tile-icon { margin-top: 4px; }
.in-sec .tile-label { margin-top: 4px; }

.sec-head {
  display: flex;
  align-items: center;
  height: 26px;
  padding: 6px 0 0 12px;
  box-sizing: border-box;
  color: #2f5296;
}
.sec-title { margin-right: 5px; }
.sec-line { flex: 1; height: 1px; background: #b4c2e2; }
.sec-chev { width: 8px; height: 6px; margin: 0 10px 0 8px; }

.scrollbar {
  width: 5px;
  flex: none;
  display: flex;
  flex-direction: column;
  background: #f0f0f0;
}
.sb-thumb { flex: 1; background: #c8c8c8; margin: 137px 0 0; }
.sb-mark { width: 3px; height: 3px; margin: 9px 0 5px 2px; flex: none; }

.spacer { height: 12px; flex: none; }

.tabs {
  position: relative;
  flex: none;
  height: 30px;
  display: flex;
  align-items: center;
  padding: 0 0 2px 5px;
  background: #f5f5f5;
  border-top: 1px solid #909090;
  box-sizing: border-box;
}
.tab {
  display: flex;
  align-items: center;
  height: 22px;
  padding: 0 6px 0 1px;
  box-sizing: border-box;
  white-space: nowrap;
  border: 1px solid transparent;
}
.tab.active { border-color: #1a84d8; background: #fff; margin-right: 1px; }
.tab-icon { width: 16px; height: 16px; margin-right: 3px; }
.mark {
  position: absolute;
  left: 551px;
  top: -1px;
  font: 15.9px/24px "Liberation Sans", sans-serif;
  color: #e4e4e4;
  text-shadow: 1px 1px 0 #fcfcfc;
  white-space: nowrap;
}

.red {
  position: absolute;
  box-sizing: border-box;
  border: 3px solid #f5201c;
  border-radius: 3px;
  pointer-events: none;
}
.box-tree { left: 4px; top: 51px; width: 194px; height: 28px; }
.box-cert { left: 407px; top: 322px; width: 91px; height: 67px; }
.box-tab { left: 324px; top: 581px; width: 84px; height: 44px; }
</style>
